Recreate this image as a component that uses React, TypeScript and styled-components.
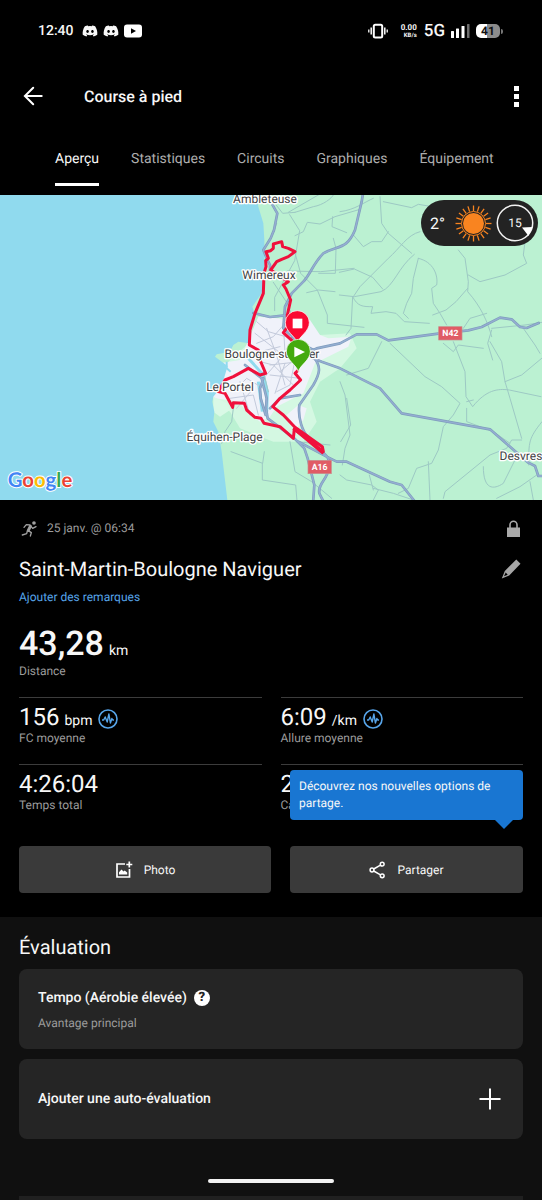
import React from 'react';
import styled, { createGlobalStyle } from 'styled-components';
import { FaDiscord } from 'react-icons/fa';

const color = {
  black: '#000',
  surface: '#101010',
  card: '#252525',
  button: '#3a3a3a',
  text: '#f7f7f7',
  muted: '#9c9c9c',
  rule: '#3c3c3c',
  link: '#57a5ea',
  tip: '#1976d2',
  route: '#f0103c',
  water: '#90daee',
  land: '#bbf1d2',
  minorRoad: '#9dc9c4',
  mainRoad: '#7f9dbd',
  mainRoadCore: '#95aed2',
};

const GlobalStyle = createGlobalStyle`
  * { box-sizing: border-box; }
  html, body { margin: 0; background: ${color.black}; }
  body {
    font-family: Roboto, "Liberation Sans", sans-serif;
    color: ${color.text};
    text-rendering: geometricPrecision;
  }
  button { font: inherit; color: inherit; border: 0; padding: 0; background: none; cursor: pointer; text-rendering: inherit; }
  svg { display: block; flex: none; }
`;

const Screen = styled.div`
  position: relative;
  display: flex;
  flex-direction: column;
  height: 100vh;
  overflow: hidden;
`;

const StatusBar = styled.div`
  display: flex;
  align-items: center;
  flex: none;
  height: 62px;
  padding: 0 39px 0 38px;
  font-size: 14px;
  font-weight: 500;
`;

const Notifications = styled.div`
  display: flex;
  align-items: center;
  gap: 5px;
  margin-left: 8px;
`;

const SystemIcons = styled.div`
  display: flex;
  align-items: center;
  margin-left: auto;
`;

const NetSpeed = styled.div`
  display: flex;
  flex-direction: column;
  align-items: flex-end;
  margin: 2px 7px 0 13px;
  font-size: 8px;
  line-height: 8px;
  font-weight: 700;
`;

const SpeedUnit = styled.span`
  font-size: 6px;
`;

const Network = styled.span`
  margin-right: 6px;
  font-size: 17px;
`;

const Battery = styled.span`
  width: 24px;
  height: 14px;
  margin-left: 6px;
  border-radius: 5px;
  background: linear-gradient(to right, #fff 46%, #8c8c8c 46%);
  color: #111;
  font-size: 12px;
  line-height: 14px;
  font-weight: 700;
  text-align: center;
`;

const BatteryTip = styled.span`
  width: 2px;
  height: 5px;
  margin-left: 1px;
  border-radius: 0 2px 2px 0;
  background: #777;
`;

const Header = styled.header`
  display: flex;
  align-items: center;
  flex: none;
  height: 68px;
  padding: 0 20px 0 23px;
`;

const PageTitle = styled.h1`
  flex: 1;
  margin: 0 0 0 41px;
  font-size: 16px;
  font-weight: 500;
`;

const IconButton = styled.button`
  display: flex;
`;

const Tabs = styled.nav`
  display: flex;
  flex: none;
  gap: 32px;
  padding: 0 0 9px 55px;
  overflow: hidden;
`;

const Tab = styled.a<{ $active?: boolean }>`
  padding-top: 5px;
  border-bottom: 3px solid ${(p) => (p.$active ? '#fff' : 'transparent')};
  color: ${(p) => (p.$active ? color.text : '#adadad')};
  font-size: 14px;
  line-height: 48px;
  text-decoration: none;
  white-space: nowrap;
`;

const Content = styled.main`
  flex: 1;
  min-height: 0;
  overflow-y: auto;
  scrollbar-width: none;
`;

const MapPanel = styled.section`
  position: relative;
  overflow: hidden;
  background: ${color.land};
`;

const MapDrawing = styled.svg`
  width: 100%;
  height: 305px;
`;

const Weather = styled.div`
  position: absolute;
  top: 5px;
  right: 4px;
  display: flex;
  align-items: center;
  height: 46px;
  padding: 0 4px 0 9px;
  border-radius: 23px;
  background: #232323;
`;

const Temperature = styled.span`
  width: 25px;
  font-size: 16px;
`;

const Wind = styled.span`
  position: relative;
  display: flex;
  margin-left: 4px;
`;

const WindSpeed = styled.span`
  position: absolute;
  inset: 0;
  font-size: 12px;
  line-height: 38px;
  text-align: center;
`;

const Summary = styled.section`
  padding: 18px 19px 24px;
`;

const Row = styled.div<{ $height: number }>`
  display: flex;
  align-items: center;
  height: ${(p) => p.$height}px;
`;

const DateText = styled.span`
  flex: 1;
  margin-left: 9px;
  color: ${color.muted};
  font-size: 12px;
  line-height: 16px;
`;

const LockSlot = styled.span`
  padding-right: 3px;
`;

const ActivityRow = styled(Row)`
  margin-top: 19px;
`;

const ActivityName = styled.h2`
  flex: 1;
  margin: 0;
  font-size: 20px;
  font-weight: 400;
`;

const NotesLink = styled.a`
  display: block;
  margin: 8px 0 20px;
  color: ${color.link};
  font-size: 12px;
  line-height: 16px;
  text-decoration: none;
`;

const Stats = styled.div`
  display: grid;
  grid-template-columns: 1fr 1fr;
  column-gap: 19px;
`;

const Stat = styled.div<{ $hero?: boolean }>`
  grid-column: ${(p) => (p.$hero ? '1 / -1' : 'auto')};
  padding: ${(p) => (p.$hero ? '0 0 18px' : '5px 0 18px')};
  border-top: ${(p) => (p.$hero ? '0' : `1px solid ${color.rule}`)};
`;

const StatValue = styled.div<{ $hero?: boolean }>`
  display: flex;
  align-items: baseline;
  gap: 5px;
  height: ${(p) => (p.$hero ? 38 : 27)}px;
  font-size: ${(p) => (p.$hero ? 34 : 24)}px;
  line-height: ${(p) => (p.$hero ? 38 : 28)}px;
  font-weight: ${(p) => (p.$hero ? 500 : 400)};
`;

const Unit = styled.span`
  font-size: 14px;
  line-height: 16px;
  font-weight: 400;
`;

const Caption = styled.div`
  color: ${color.muted};
  font-size: 12px;
  line-height: 16px;
`;

const ChartButton = styled(IconButton)`
  align-self: center;
  margin: 4px 0 0 1px;
`;

const Actions = styled.div`
  display: grid;
  grid-template-columns: 252fr 233fr;
  gap: 19px;
  margin-top: 15px;
`;

const ActionSlot = styled.div`
  position: relative;
`;

const Action = styled.button`
  display: flex;
  align-items: center;
  justify-content: center;
  gap: 11px;
  width: 100%;
  height: 47px;
  border-radius: 4px;
  background: ${color.button};
  font-size: 12px;
`;

const Tooltip = styled.div`
  position: absolute;
  bottom: calc(100% + 26px);
  left: 0;
  right: 0;
  padding: 8px 9px;
  border-radius: 4px;
  background: ${color.tip};
  font-size: 12px;
  line-height: 17px;

  &::after {
    content: '';
    position: absolute;
    top: 100%;
    right: 10px;
    border: 9px solid transparent;
    border-top-color: ${color.tip};
    border-bottom: 0;
  }
`;

const Evaluation = styled.section`
  display: flex;
  flex-direction: column;
  gap: 10px;
  padding: 18px 19px 0;
  background: ${color.surface};
`;

const SectionTitle = styled.h2`
  margin: 0;
  font-size: 20px;
  line-height: 24px;
  font-weight: 400;
`;

const Card = styled.div`
  display: flex;
  flex-direction: column;
  gap: 7px;
  padding: 19px 19px 18px;
  border-radius: 8px;
  background: ${color.card};
`;

const CardTitle = styled.div`
  display: flex;
  align-items: center;
  gap: 7px;
  font-size: 14px;
  line-height: 20px;
  font-weight: 500;
`;

const HelpButton = styled.button`
  width: 16px;
  height: 16px;
  border-radius: 50%;
  background: #fff;
  && { color: ${color.card}; font-size: 13px; line-height: 16px; font-weight: 900; }
`;

const AddCard = styled.button`
  display: flex;
  align-items: center;
  justify-content: space-between;
  height: 80px;
  padding: 0 22px 0 19px;
  border-radius: 8px;
  background: ${color.card};
  font-size: 14px;
  font-weight: 500;
`;

const NextPanel = styled.div`
  height: 80px;
  margin-top: 47px;
  background: #202020;
`;

const HomeIndicator = styled.div`
  position: absolute;
  bottom: 17px;
  left: 50%;
  width: 126px;
  height: 4px;
  margin-left: -63px;
  border-radius: 2px;
  background: #f2f2f2;
`;

function YoutubeIcon() {
  return (
    <svg width="18" height="14" viewBox="0 0 18 14">
      <rect width="18" height="13" y="0.5" rx="3" fill="#fff" />
      <path d="M7 4.3 12 7 7 9.7z" fill="#000" />
    </svg>
  );
}

function VibrateIcon() {
  return (
    <svg width="20" height="16" viewBox="0 0 20 16" fill="none" stroke="#fff">
      <rect x="5.8" y="1.7" width="8.4" height="12.8" rx="1.5" strokeWidth="2" />
      <path d="M3.2 4.5v7M16.8 4.5v7" strokeWidth="1.5" />
      <path d="M0.8 6.5v3M19.2 6.5v3" strokeWidth="1.3" />
    </svg>
  );
}

function SignalIcon() {
  return (
    <svg width="19" height="14" viewBox="0 0 19 14" fill="#fff">
      <rect x="0" y="7" width="3" height="7" rx="0.5" />
      <rect x="5" y="4.500" width="3" height="9.500" rx="0.5" />
      <rect x="10.500" y="2" width="3" height="12" rx="0.5" />
      <rect x="16" y="0" width="2.500" height="14" rx="0.5" fill="#6c6c6c" />
    </svg>
  );
}

function BackIcon() {
  return (
    <svg width="20" height="20" viewBox="0 0 20 20" fill="none" stroke="#fff" strokeWidth="2" strokeLinecap="round">
      <path d="M18.700 10H2M10.200 1.700 1.900 10l8.300 8.300" />
    </svg>
  );
}

function MoreIcon() {
  return (
    <svg width="11" height="24" viewBox="0 0 11 24" fill="#fff">
      <path d="M3 2h5v5H3zM3 10h5v5H3zM3 18h5v5H3z" />
    </svg>
  );
}

function RunnerIcon() {
  return (
    <svg width="19" height="19" viewBox="56 57 57 57" fill="none" stroke="#a0a0a0" strokeLinecap="round" strokeLinejoin="round">
      <circle cx="101" cy="69" r="5.500" fill="#a0a0a0" stroke="none" />
      <path d="m90 79-6 12" strokeWidth="9" />
      <path d="m90 77 7 8 10-5M89 75l-11-1-7 8M84 92l9 6-3 10M81 93l-2 8-13 4" strokeWidth="4" />
    </svg>
  );
}

function LockIcon() {
  return (
    <svg width="13" height="17" viewBox="0 0 13 17">
      <path d="M0 7.500h13V17H0z" fill="#aaa" />
      <path d="M3 8V4.800a3.500 3.500 0 0 1 7 0V8" fill="none" stroke="#aaa" strokeWidth="1.600" />
    </svg>
  );
}

function PencilIcon() {
  return (
    <svg width="22" height="22" viewBox="0 0 22 22">
      <path fill="#a6a6a6" fillRule="evenodd" d="M15.300 1.500 19.500 5.700 8.200 17.500.800 20.500l3-7.600zM4.700 14.500 3 18.300l3.700-1.500z" />
    </svg>
  );
}

function PulseIcon() {
  return (
    <svg width="20" height="20" viewBox="0 0 20 20" fill="none" stroke={color.link}>
      <circle cx="10" cy="10" r="9" strokeWidth="1.600" />
      <path d="M4 11h1.700l1.500-3 2 5 1.700-8 1.500 9 1.500-4.500.800 1.500H16" strokeWidth="1.400" strokeLinejoin="round" />
    </svg>
  );
}

function AddPhotoIcon() {
  return (
    <svg width="18" height="18" viewBox="0 0 18 18" fill="none" stroke="#fff" strokeWidth="1.700">
      <path d="M10 3H2v13h12.500V8" />
      <path d="M14.300.5v6M11.300 3.500h6" />
      <path d="M4 13.500v-2.200L6.500 8.500l2 2 1.200-1 2.500 2v2z" fill="#fff" stroke="none" />
    </svg>
  );
}

function ShareIcon() {
  return (
    <svg width="17" height="18" viewBox="0 0 17 18" fill="none" stroke="#fff" strokeWidth="1.500">
      <circle cx="13.200" cy="3.200" r="1.900" />
      <circle cx="3" cy="9" r="1.900" />
      <circle cx="13.200" cy="14.800" r="1.900" />
      <path d="m4.700 8 6.800-3.800M4.700 10l6.800 3.800" />
    </svg>
  );
}

function PlusIcon() {
  return (
    <svg width="22" height="22" viewBox="0 0 22 22" stroke="#fff" strokeWidth="2">
      <path d="M11 .5v21M.5 11h21" />
    </svg>
  );
}

function SunIcon() {
  const rays = Array.from({ length: 20 }, (_, i) => i * 18);
  return (
    <svg width="37" height="37" viewBox="-18.500 -18.500 37 37">
      <circle r="10.500" fill="#f98420" />
      <circle r="12" fill="none" stroke="#f98420" strokeWidth="1" />
      {rays.map((a) => (
        <path key={a} d="M0-12.500V-18" stroke="#f98420" strokeWidth="1.300" transform={`rotate(${a})`} />
      ))}
    </svg>
  );
}

function WindDial() {
  return (
    <svg width="38" height="38" viewBox="0 0 38 38">
      <circle cx="19" cy="19" r="17.700" fill="none" stroke="#f2f2f2" strokeWidth="1.500" />
      <path d="M26 23.500l10.500-.5-4 9z" fill="#fff" />
    </svg>
  );
}

const minorRoads = [
  // coast and hills north of Boulogne
  'M813 10l35 45 37-3M865 52l95-55M830 85l-8 25M869 59l30 48-15 90-60 110 0 40M1000 0c-5 10-30 30-60 35l-55 17M885 122l25-12 12-28 38 5 45-22 75-22M998 65l-2 30 44 18M1000 130l8 30-2 75-50 0M862 228l100 2 100-10M884 170l18 65 50 50 30 75 0 25 110 12M1005 290l-50-5-35 8M820 262l40 60 20 50',
  // northern plain
  'M1020 50c45-5 75-30 100-40M1140 5l5 80 20 30 70 60M1165 110l-20 30-30 0-25 15-30-35M1150 20l85 18 20-10 60 10M1260 110c-40 10-60 50-95 80l-85 85-20 30M1243 178c-50 40-60 95-100 112l-80 15-45-5M1255 190l-15 60-5 45-15 30-10 30 15 15M1255 190c45 10 60 50 55 80l-15 10 5 45 20 30 20 35M1058 305l-5 95-15 20M1058 305c15 30 30 30 60 30l-5 20 45-5 30 5 25 25 75 5M1018 232l45-10 55 25 30 35',
  'M1375 165l20 25 10 70-2 30c40 45 60 90 72 135M1403 280l-35 40-30 25-40 15M1405 240l35 20 75-20 65-35-10-25 5-40M1475 400l100-10 51-8M1570 400l35 50 15 25M1475 405l-12 40 15 50M1390 400l20-30 50-15M1330 445l30 25 15-20 75 10',
  // between the N42 and Desvres
  'M1145 440l-40 80-65 20M1170 445l105 100 50 30 55 50-20 35-30 35-15 70-20 40-45 15-25 60-30 15M1360 440l35 90 3 75 20 30c40-50 75-55 110-50l95 20M1470 440l35 60 10 60 15 50 35 120M1515 560l50-20 60-50M1400 640l0 40 80 30 50 35M1565 735l-30 0-15 25-50 20-135 110-5 20M1450 815c0 70 30 70 60 50l40-80M1626 680c-40 50-40 60-40 130M1400 620l20-5M1490 910l70-35 50-35M1590 860l10 55M1285 800l5 115',
  'M1020 560l15 40 15 120-15 40-8 50M1020 840l20 15 75 15 20 15-15 30M1120 880l60 15 60 20M1108 840l12 45',
  // south west of the valley
  'M700 640l-5 40-20 30-10 35M693 770l95 35 5-35M787 805l0 50 100 15 5 60M790 530l15 60M1040 610l12 80-30 50M870 740l15 90 50 30 60 50M890 740l100 10',
];

const mainRoads = [
  'M812 20l20 35-10 50-10 25-22 35 10 25 10 20 0 40',
  'M1090-10l-5 30-20 85c-25 60-50 45-95 70-30 30-40 65-60 85l-35 35-20 40-5 65 50 45 40 40c25 30 20 50 0 85l-42 60c-5 40 10 80 25 95 35 50 70 50 65 90-5 40-35 50-30 80 15 35 30 40 35 90',
  'M760 354l50 12 45-5M875 430l65 35 10-5 70-15 50-27 60 0 35 18 150-20 90-10 40-10 55-28 35 5 25 23 20 3 36-15',
  'M915 480l50 20 55 20 120 60 65 75 265 48 115 100 20 10 10 30 38 0',
  'M735 510l50 40 15 60-2 30 5 30 80 60 30 30 10 30 20 80-5 70M790 550l-10 30 2 30 15 50M900 600l-60 10-30 30M895 740l85 45 30 15 30 0 130 60 35 10 40 50',
];

const streets = [
  'M770 380l35 30 70 20M765 415l90 70 40 10M770 445l50-20 35-40M780 470l60-15M800 400l30 80 25 90M850 385l5 90-60 70M860 420l40 60-60 50M780 500l40 10 60 60M855 505l-30 90M890 470l-20 100-40 20M900 500l-90 10M810 540l90 10',
  'M700 590l40-40 50 30M690 610l70-10 15 60M720 560l30 100M710 640l50-60',
];

const labels: Array<{ x: number; y: number; text: string }> = [
  { x: 795, y: 24, text: 'Ambleteuse' },
  { x: 807, y: 251, text: 'Wimereux' },
  { x: 816, y: 490, text: 'Boulogne-sur-Mer' },
  { x: 690, y: 587, text: 'Le Portel' },
  { x: 674, y: 738, text: 'Équihen-Plage' },
  { x: 1563, y: 794, text: 'Desvres' },
];

const googleLetters: Array<[string, string]> = [
  ['G', '#4285f4'],
  ['o', '#ea4335'],
  ['o', '#fbbc05'],
  ['g', '#4285f4'],
  ['l', '#34a853'],
  ['e', '#ea4335'],
];

function RoadSign({ x, y, text }: { x: number; y: number; text: string }) {
  return (
    <g transform={`translate(${x} ${y})`}>
      <rect x="-35" y="-20" width="70" height="40" fill="#e05c65" stroke="#c98c8c" strokeWidth="2" />
      <text y="9" textAnchor="middle" fontSize="26" fontWeight="700" fill="#fff">{text}</text>
    </g>
  );
}

function Pin({ x, y, fill, children }: { x: number; y: number; fill: string; children: React.ReactNode }) {
  return (
    <g transform={`translate(${x} ${y})`}>
      <path
        d="M0 58C-5 38-36 24-36-3a36 36 0 0 1 72 0C36 24 5 38 0 58z"
        fill={fill}
        stroke="#fff"
        strokeOpacity="0.7"
        strokeWidth="3"
      />
      {children}
    </g>
  );
}

function RouteMap() {
  return (
    <MapDrawing viewBox="0 0 1626 915" preserveAspectRatio="xMidYMid slice" role="img" aria-label="Parcours">
      <rect width="1626" height="915" fill={color.land} />
      <path
        d="M840 365l60 20 60 35 90-5 20 45-50 60-60 40-30 60 20 60-40 60-90 0-100-40-30-50-50-40-5-50 60-70z"
        fill="#d4f8e2"
      />
      <path
        d="M775 365l60 5 50 20 45-15 30 45 25 10 70-5-10 30-40 20-60 30-35 90-80 40-20 30-30 15-35-25-30-35-70-10-45-20 0-40 60-45 60-10z"
        fill="#f0f2fa"
      />
      <path d="M860 660l35-30 25 10-10 35-20 25z" fill="#f0f2fa" />
      <path d="M640 605l40 20 10 20-30 20-20-15z" fill="#d9f9e6" />
      <path
        d="M0 0H768l7 35 15 50 3 50v100l-8 60-28 40 8 25-15 45-3 40-32-5-15 10-10 20-40 8-5 7 38 28-11 37-12 30-20 25-3 15 6 30-3 30 15 30 10 60 7 60 10 85H0z"
        fill={color.water}
      />
      <path d="M745 490l45 50 12 50-2 60M775 560l12 90" fill="none" stroke={color.water} strokeWidth="9" />
      <path d="M680 500l0 20 12 10" fill="none" stroke={color.water} strokeWidth="6" />
      <g fill="none" strokeLinejoin="round" strokeLinecap="round">
        {streets.map((d) => (
          <path key={d} d={d} stroke="#c3cadb" strokeWidth="3" />
        ))}
        {minorRoads.map((d) => (
          <path key={d} d={d} stroke={color.minorRoad} strokeWidth="3" />
        ))}
        {mainRoads.map((d) => (
          <path key={d} d={d} stroke={color.mainRoad} strokeWidth="8" />
        ))}
        {mainRoads.map((d) => (
          <path key={d} d={d} stroke={color.mainRoadCore} strokeWidth="4" />
        ))}
      </g>
      <g fill="none" stroke={color.route} strokeWidth="9" strokeLinejoin="round">
        <path d="M885 445l-35-32 12-16 0-37 10-45-14-33-8-12 15-10-30-20-23-15 18-25 15-7 20-8 20-15-20-10-17-5-3-15-25 7 0 13-8 7-14 3 7 20-8 7 1 18-6 20-2 60-25 60-15 50-2 45 27 15 5 30 17 40-17 5-35-20-45 25-25 10-20 35 20 5 23 42 2-14 33 2 7 20 25 22 18 3 9 15 48 10 40 35 3-28 87 73" />
        <path d="M880 700l90 70-3-15-82-58-35-37-32-25 22-25 30-25 32-30-17-20 10-10" />
      </g>
      <g
        fontSize="36"
        textAnchor="middle"
        fill="#3f4244"
        stroke="#fff"
        strokeWidth="8"
        strokeLinejoin="round"
        paintOrder="stroke"
      >
        {labels.map((l) => (
          <text key={l.text} x={l.x} y={l.y}>{l.text}</text>
        ))}
      </g>
      <RoadSign x={1351} y={415} text="N42" />
      <RoadSign x={959} y={816} text="A16" />
      <Pin x={892} y={386} fill="#fa0a32">
        <rect x="-14" y="-15" width="29" height="29" fill="#fff" />
      </Pin>
      <Pin x={895} y={472} fill="#44aa0e">
        <path d="M-12-17 20-1-12 15z" fill="#fff" />
      </Pin>
      <text
        x="23"
        y="876"
        fontFamily="Lato, Roboto, sans-serif"
        fontSize="61"
        fontWeight="700"
        stroke="#fff"
        strokeWidth="6"
        strokeLinejoin="round"
        paintOrder="stroke"
      >
        {googleLetters.map(([letter, fill], i) => (
          <tspan key={i} fill={fill}>{letter}</tspan>
        ))}
      </text>
    </MapDrawing>
  );
}

type StatProps = { value: string; unit?: string; caption: string; hero?: boolean; chart?: boolean };

function StatCell({ value, unit, caption, hero, chart }: StatProps) {
  return (
    <Stat $hero={hero}>
      <StatValue $hero={hero}>
        {value}
        {unit && <Unit>{unit}</Unit>}
        {chart && (
          <ChartButton aria-label={`Graphique ${caption}`}>
            <PulseIcon />
          </ChartButton>
        )}
      </StatValue>
      <Caption>{caption}</Caption>
    </Stat>
  );
}

const tabs = ['Aperçu', 'Statistiques', 'Circuits', 'Graphiques', 'Équipement'];

export default function App() {
  return (
    <Screen>
      <GlobalStyle />
      <StatusBar>
        12:40
        <Notifications>
          <FaDiscord size={16} />
          <FaDiscord size={16} />
          <YoutubeIcon />
        </Notifications>
        <SystemIcons>
          <VibrateIcon />
          <NetSpeed>
            0.00
            <SpeedUnit>KB/s</SpeedUnit>
          </NetSpeed>
          <Network>5G</Network>
          <SignalIcon />
          <Battery>41</Battery>
          <BatteryTip />
        </SystemIcons>
      </StatusBar>
      <Header>
        <IconButton aria-label="Retour">
          <BackIcon />
        </IconButton>
        <PageTitle>Course à pied</PageTitle>
        <IconButton aria-label="Plus d'options">
          <MoreIcon />
        </IconButton>
      </Header>
      <Tabs>
        {tabs.map((name, i) => (
          <Tab key={name} href="#" $active={i === 0}>{name}</Tab>
        ))}
      </Tabs>
      <Content>
        <MapPanel>
          <RouteMap />
          <Weather>
            <Temperature>2°</Temperature>
            <SunIcon />
            <Wind>
              <WindDial />
              <WindSpeed>15</WindSpeed>
            </Wind>
          </Weather>
        </MapPanel>
        <Summary>
          <Row $height={20}>
            <RunnerIcon />
            <DateText>25 janv. @ 06:34</DateText>
            <LockSlot>
              <LockIcon />
            </LockSlot>
          </Row>
          <ActivityRow $height={24}>
            <ActivityName>Saint-Martin-Boulogne Naviguer</ActivityName>
            <IconButton aria-label="Modifier le nom">
              <PencilIcon />
            </IconButton>
          </ActivityRow>
          <NotesLink href="#">Ajouter des remarques</NotesLink>
          <Stats>
            <StatCell hero value="43,28" unit="km" caption="Distance" />
            <StatCell value="156" unit="bpm" caption="FC moyenne" chart />
            <StatCell value="6:09" unit="/km" caption="Allure moyenne" chart />
            <StatCell value="4:26:04" caption="Temps total" />
            <StatCell value="2" caption="Calories" />
          </Stats>
          <Actions>
            <Action>
              <AddPhotoIcon />
              Photo
            </Action>
            <ActionSlot>
              <Action>
                <ShareIcon />
                Partager
              </Action>
              <Tooltip role="tooltip">Découvrez nos nouvelles options de partage.</Tooltip>
            </ActionSlot>
          </Actions>
        </Summary>
        <Evaluation>
          <SectionTitle>Évaluation</SectionTitle>
          <Card>
            <CardTitle>
              Tempo (Aérobie élevée)
              <HelpButton aria-label="Aide">?</HelpButton>
            </CardTitle>
            <Caption>Avantage principal</Caption>
          </Card>
          <AddCard>
            Ajouter une auto-évaluation
            <PlusIcon />
          </AddCard>
          <NextPanel />
        </Evaluation>
      </Content>
      <HomeIndicator />
    </Screen>
  );
}
